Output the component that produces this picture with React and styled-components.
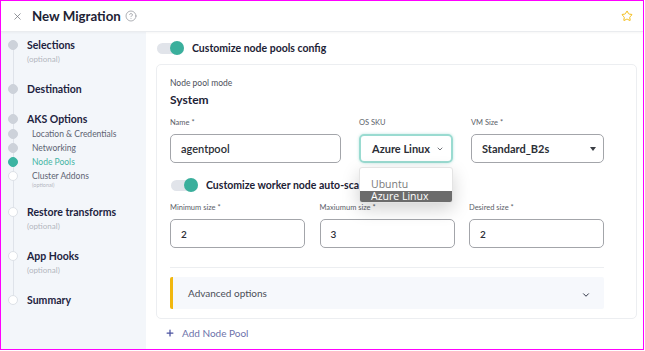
import React from "react";
import styled, { createGlobalStyle } from "styled-components";
import { X, CircleHelp, Star, ChevronDown, Plus } from "lucide-react";

const GlobalStyle = createGlobalStyle`
  * { box-sizing: border-box; }
  body {
    margin: 0;
    font-family: Lato, "Open Sans", sans-serif;
    color: #1d2235;
    background: #fff;
  }
`;

const steps = [
  { title: "Selections", optional: true, state: "done" },
  { title: "Destination", state: "done" },
  {
    title: "AKS Options",
    state: "done",
    subs: [
      { label: "Location & Credentials", state: "done" },
      { label: "Networking", state: "done" },
      { label: "Node Pools", state: "active" },
      { label: "Cluster Addons", state: "todo", optional: true },
    ],
  },
  { title: "Restore transforms", optional: true, state: "todo" },
  { title: "App Hooks", optional: true, state: "todo" },
  { title: "Summary", state: "todo" },
];

export default function App() {
  return (
    <>
      <GlobalStyle />
      <Frame>
        <Header>
          <CloseBtn>
            <X size={11} strokeWidth={1.6} />
          </CloseBtn>
          <Title>New Migration</Title>
          <HelpIcon>
            <CircleHelp size={12} strokeWidth={1.4} />
          </HelpIcon>
          <StarBtn>
            <Star size={12} strokeWidth={1.8} />
          </StarBtn>
        </Header>
        <Body>
          <Sidebar>
            <StepList>
              {steps.map((step) => (
                <Step key={step.title}>
                  <StepRow>
                    <Dot $state={step.state} />
                    <StepTitle>{step.title}</StepTitle>
                  </StepRow>
                  {step.optional && <Optional>(optional)</Optional>}
                  {step.subs && (
                    <SubList>
                      {step.subs.map((sub) => (
                        <React.Fragment key={sub.label}>
                          <SubRow>
                            <Dot $state={sub.state} />
                            <SubLabel $active={sub.state === "active"}>
                              {sub.label}
                            </SubLabel>
                          </SubRow>
                          {sub.optional && (
                            <SubOptional>(optional)</SubOptional>
                          )}
                        </React.Fragment>
                      ))}
                    </SubList>
                  )}
                </Step>
              ))}
            </StepList>
          </Sidebar>
          <Main>
            <ToggleRow>
              <Toggle />
              <ToggleLabel>Customize node pools config</ToggleLabel>
            </ToggleRow>
            <Card>
              <SmallLabel>Node pool mode</SmallLabel>
              <ModeValue>System</ModeValue>
              <FieldGrid $cols="171px 94px 133px" $gap="18px" $top="10px">
                <Field>
                  <FieldLabel>Name *</FieldLabel>
                  <Input>agentpool</Input>
                </Field>
                <Field>
                  <FieldLabel>OS SKU</FieldLabel>
                  <SelectWrap>
                    <Select $focused>
                      <SelectText>Azure Linux</SelectText>
                      <ChevronDown size={8} strokeWidth={2} />
                    </Select>
                    <Dropdown>
                      <Option>Ubuntu</Option>
                      <Option $selected>Azure Linux</Option>
                    </Dropdown>
                  </SelectWrap>
                </Field>
                <Field>
                  <FieldLabel>VM Size *</FieldLabel>
                  <Select>
                    <SelectText>Standard_B2s</SelectText>
                    <Caret />
                  </Select>
                </Field>
              </FieldGrid>
              <WorkerToggleRow>
                <Toggle />
                <ClippedLabel>Customize worker node auto-scaling</ClippedLabel>
              </WorkerToggleRow>
              <FieldGrid $cols="1fr 1fr 1fr" $gap="14.5px" $top="11px">
                <Field>
                  <FieldLabel>Minimum size *</FieldLabel>
                  <Input $small>2</Input>
                </Field>
                <Field>
                  <FieldLabel>Maxiumum size *</FieldLabel>
                  <Input $small>3</Input>
                </Field>
                <Field>
                  <FieldLabel>Desired size *</FieldLabel>
                  <Input $small>2</Input>
                </Field>
              </FieldGrid>
              <Divider />
              <Advanced>
                <span>Advanced options</span>
                <ChevronDown size={10} strokeWidth={2.2} />
              </Advanced>
            </Card>
            <AddPool>
              <Plus size={10} strokeWidth={3} />
              <span>Add Node Pool</span>
            </AddPool>
          </Main>
        </Body>
      </Frame>
    </>
  );
}

const Frame = styled.div`
  width: 644px;
  height: 350px;
  border: 1px solid #ff00ff;
  display: flex;
  flex-direction: column;
  overflow: hidden;
`;

const Header = styled.div`
  height: 31px;
  flex: none;
  display: flex;
  align-items: center;
  padding: 0 10px 0 11px;
  border-bottom: 1px solid #eaecef;
  box-shadow: 0 1px 2px rgba(0, 0, 0, 0.04);
  position: relative;
  z-index: 1;
`;

const CloseBtn = styled.span`
  display: flex;
  color: #6d7079;
  width: 11px;
`;

const Title = styled.h1`
  margin: 0 0 0 9px;
  font-size: 13.3px;
  font-weight: 700;
  color: #1d2235;
`;

const HelpIcon = styled.span`
  display: flex;
  color: #8c8f96;
  margin-left: 4px;
`;

const StarBtn = styled.span`
  display: flex;
  color: #f2b600;
  margin-left: auto;
`;

const Body = styled.div`
  flex: 1;
  display: flex;
  min-height: 0;
`;

const Sidebar = styled.nav`
  width: 145px;
  flex: none;
  background: #f3f6fa;
  padding-top: 6px;
`;

const StepList = styled.div`
  position: relative;
  display: flex;
  flex-direction: column;
  gap: 16px;

  &::before {
    content: "";
    position: absolute;
    left: 11.5px;
    top: 7px;
    height: 254px;
    width: 1px;
    background: #dfe3ea;
  }
`;

const Step = styled.div`
  display: flex;
  flex-direction: column;
  position: relative;
`;

const StepRow = styled.div`
  display: flex;
  align-items: center;
  height: 14px;
  padding-left: 7px;
  gap: 9px;
`;

const SubList = styled.div`
  display: flex;
  flex-direction: column;
  margin-top: 1px;
`;

const SubRow = styled(StepRow)`
  gap: 14px;
`;

const Dot = styled.span`
  width: 10px;
  height: 10px;
  border-radius: 50%;
  flex: none;
  background: ${(p) =>
    p.$state === "done" ? "#cdd2da" : p.$state === "active" ? "#3cb4a2" : "#fff"};
  border: 1px solid
    ${(p) =>
      p.$state === "done" ? "#cdd2da" : p.$state === "active" ? "#3cb4a2" : "#dde1e7"};
  position: relative;
  z-index: 1;
`;

const StepTitle = styled.span`
  font-size: 10.5px;
  font-weight: 700;
  color: #1d2340;
`;

const Optional = styled.span`
  font-size: 8px;
  line-height: 14px;
  color: #b3b7bf;
  padding-left: 26px;
`;

const SubLabel = styled.span`
  font-size: 8.5px;
  color: ${(p) => (p.$active ? "#44b5a4" : "#5d6372")};
`;

const SubOptional = styled.span`
  font-size: 5.5px;
  line-height: 8px;
  margin-top: -2px;
  color: #b3b7bf;
  padding-left: 31px;
`;

const Main = styled.main`
  flex: 1;
  padding: 9px 6px 0 10px;
  display: flex;
  flex-direction: column;
`;

const ToggleRow = styled.div`
  display: flex;
  align-items: center;
  height: 14px;
  gap: 8px;
  padding-left: 1px;
`;

const Toggle = styled.span`
  width: 27px;
  height: 11px;
  border-radius: 6px;
  background: #e1e4ea;
  position: relative;
  flex: none;

  &::after {
    content: "";
    position: absolute;
    right: 0;
    top: -2px;
    width: 14px;
    height: 14px;
    border-radius: 50%;
    background: #3aaf9c;
  }
`;

const ToggleLabel = styled.span`
  font-size: 10.5px;
  font-weight: 700;
  color: #1d2235;
  white-space: nowrap;
`;

const ClippedLabel = styled(ToggleLabel)`
  max-width: 154px;
  overflow: hidden;
`;

const Card = styled.section`
  margin-top: 9px;
  border: 1px solid #eceef1;
  border-radius: 5px;
  padding: 12px 32px 9px 13px;
  display: flex;
  flex-direction: column;
`;

const SmallLabel = styled.div`
  font-size: 8.5px;
  line-height: 12px;
  color: #4c505a;
`;

const ModeValue = styled.div`
  margin-top: 3px;
  font-size: 12px;
  line-height: 16px;
  font-weight: 700;
  color: #1d2235;
`;

const FieldGrid = styled.div`
  display: grid;
  grid-template-columns: ${(p) => p.$cols};
  column-gap: ${(p) => p.$gap};
  margin-top: ${(p) => p.$top};
`;

const Field = styled.div`
  display: flex;
  flex-direction: column;
  gap: 6px;
  min-width: 0;
`;

const FieldLabel = styled.label`
  font-size: 7.5px;
  line-height: 10px;
  color: #5a5e68;
`;

const Input = styled.div`
  height: 29px;
  border: 1px solid #a3a5aa;
  border-radius: 5px;
  display: flex;
  align-items: center;
  padding-left: 10px;
  font-size: ${(p) => (p.$small ? "10px" : "11px")};
  color: #2b2e36;
  font-weight: 600;
`;

const SelectWrap = styled.div`
  position: relative;
`;

const Select = styled.div`
  height: 29px;
  border: ${(p) => (p.$focused ? "2px solid #9adbd1" : "1px solid #a3a5aa")};
  box-shadow: ${(p) => (p.$focused ? "0 0 3px rgba(60, 180, 162, 0.35)" : "none")};
  border-radius: 5px;
  display: flex;
  align-items: center;
  justify-content: space-between;
  padding: 0 7px 0 ${(p) => (p.$focused ? "11px" : "10px")};
  color: #2b2e36;
`;

const SelectText = styled.span`
  font-size: 11px;
  font-weight: 700;
  color: #2b2e36;
`;

const Caret = styled.span`
  width: 0;
  height: 0;
  border-left: 3.5px solid transparent;
  border-right: 3.5px solid transparent;
  border-top: 4px solid #3a3d44;
`;

const Dropdown = styled.div`
  position: absolute;
  left: 0;
  right: 0;
  top: 33px;
  height: 36px;
  background: #fff;
  border: 1px solid #e4e4e4;
  border-radius: 3px;
  box-shadow: 0 6px 18px rgba(0, 0, 0, 0.18);
  display: flex;
  flex-direction: column;
  justify-content: flex-end;
  overflow: hidden;
  z-index: 5;
`;

const Option = styled.div`
  font-family: "Open Sans", "Noto Sans", sans-serif;
  font-size: 10.5px;
  line-height: 11.5px;
  padding-left: 11px;
  color: ${(p) => (p.$selected ? "#fff" : "#7a7a7a")};
  background: ${(p) => (p.$selected ? "#6c6c6c" : "transparent")};
`;

const WorkerToggleRow = styled(ToggleRow)`
  margin-top: 15px;
`;

const Divider = styled.hr`
  margin: 19px 0 0;
  border: none;
  border-top: 1px solid #eceef1;
  height: 0;
  width: 100%;
`;

const Advanced = styled.div`
  margin-top: 9px;
  height: 32px;
  background: #f6f8fc;
  border-left: 3px solid #f1b70f;
  border-radius: 2px;
  display: flex;
  align-items: center;
  justify-content: space-between;
  padding: 0 13px 0 15px;
  font-size: 10px;
  color: #4a4e58;

  svg {
    color: #1d2235;
    margin-top: 3px;
  }
`;

const AddPool = styled.div`
  margin-top: 8px;
  display: flex;
  align-items: center;
  gap: 7px;
  padding-left: 9px;
  font-size: 10px;
  color: #6d72aa;

  svg {
    color: #4b52a0;
  }
`;
